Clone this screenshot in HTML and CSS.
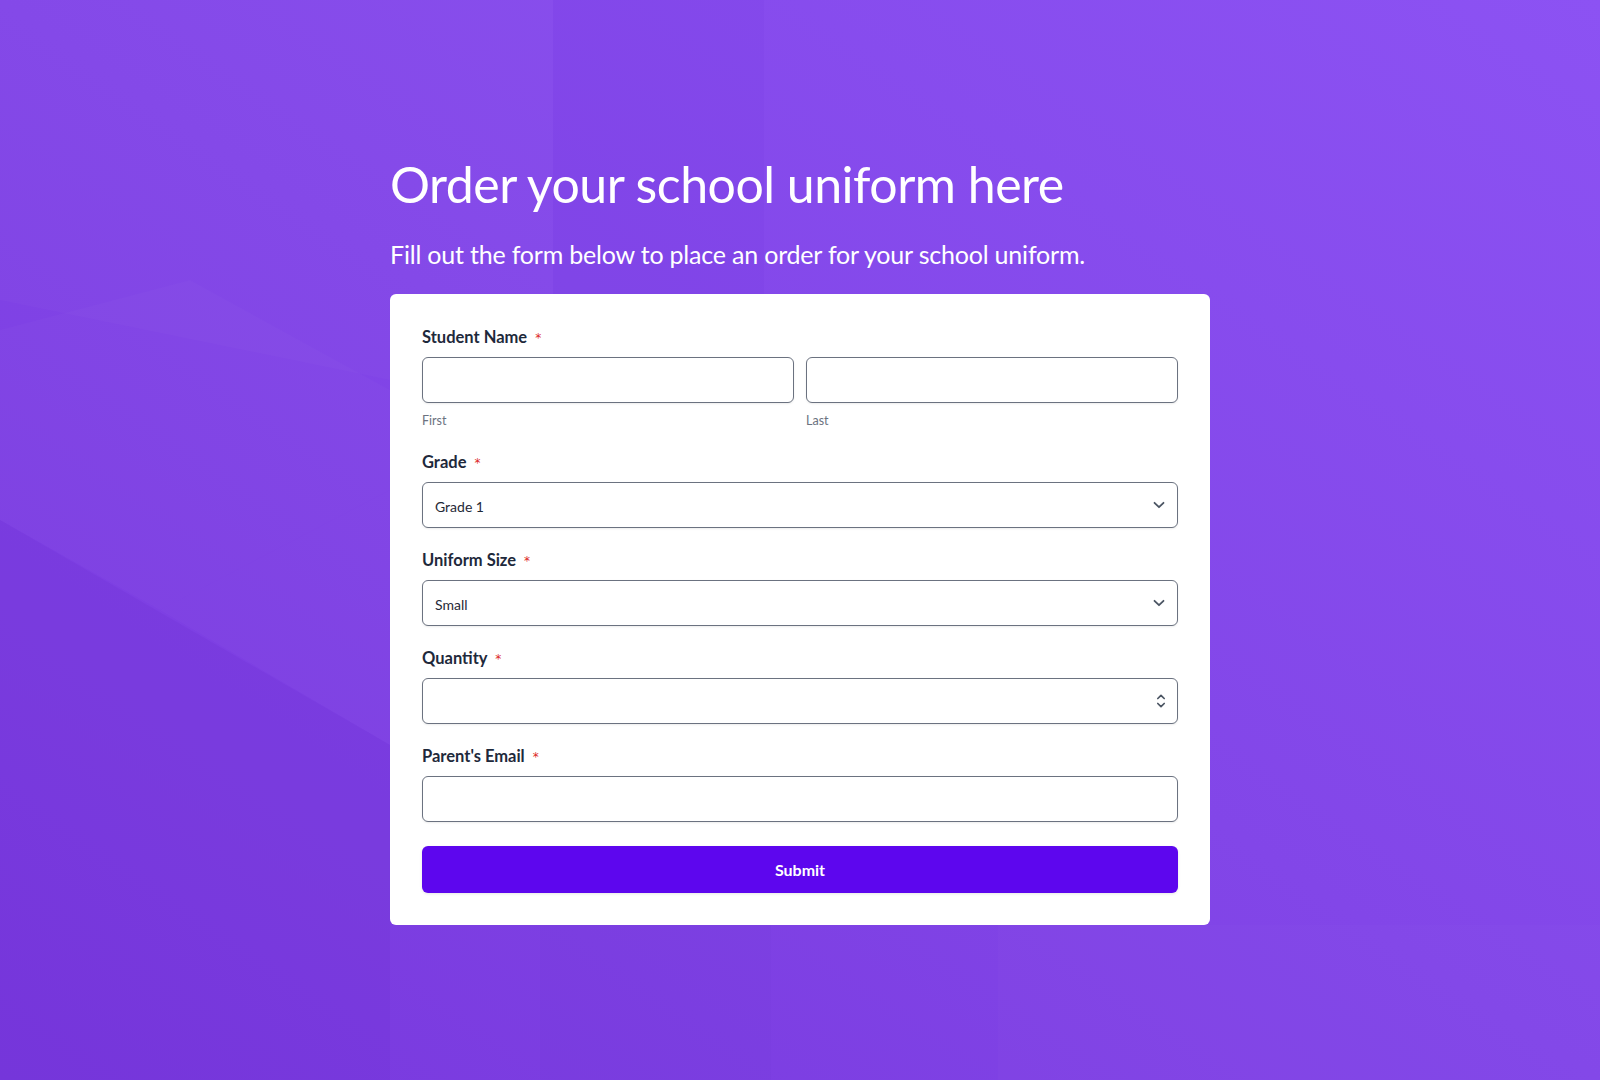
FILE: index.html
```html
<!DOCTYPE html>
<html lang="en">
<head>
<meta charset="utf-8">
<title>Order your school uniform here</title>
<link rel="stylesheet" href="styles.css">
</head>
<body>
<div class="bg" aria-hidden="true">
  <svg class="bg-art" viewBox="0 0 1600 1080" preserveAspectRatio="none" xmlns="http://www.w3.org/2000/svg">
    <defs>
      <linearGradient id="base" x1="0" y1="1" x2="1" y2="0">
        <stop offset="0" stop-color="#7838dd"/>
        <stop offset="0.5" stop-color="#8246e8"/>
        <stop offset="1" stop-color="#8c52f3"/>
      </linearGradient>
    </defs>
    <rect width="1600" height="1080" fill="url(#base)"/>
    <polygon points="0,520 390,745 390,1080 0,1080" fill="#6a2bd0" opacity="0.16"/>
    <polygon points="0,0 553,0 553,300 390,380 0,300" fill="#ffffff" opacity="0.02"/>
    <polygon points="0,330 190,280 390,390 390,490 160,610 0,520" fill="#ffffff" opacity="0.018"/>
    <polygon points="160,610 390,490 390,745" fill="#ffffff" opacity="0.018"/>
    <rect x="553" y="0" width="211" height="294" fill="#6a2bd0" opacity="0.07"/>
    <rect x="540" y="925" width="231" height="155" fill="#6a2bd0" opacity="0.06"/>
    <rect x="998" y="925" width="602" height="155" fill="#ffffff" opacity="0.015"/>
  </svg>
</div>
<main class="wrap">
  <h1 class="title">Order your school uniform here</h1>
  <p class="lead">Fill out the form below to place an order for your school uniform.</p>
  <form class="card" onsubmit="return false">
    <div class="field field-name">
      <label class="lbl">Student Name <span class="req">*</span></label>
      <div class="name-row">
        <div class="sub">
          <input class="ctl" type="text" aria-label="First">
          <span class="hint">First</span>
        </div>
        <div class="sub">
          <input class="ctl" type="text" aria-label="Last">
          <span class="hint">Last</span>
        </div>
      </div>
    </div>
    <div class="field">
      <label class="lbl">Grade <span class="req">*</span></label>
      <div class="ctl-wrap">
        <div class="ctl ctl-select">Grade 1</div>
        <svg class="ico" width="12" height="8" viewBox="0 0 12 8"><path d="M1.5 1.8 L6 6.2 L10.5 1.8" fill="none" stroke="#4b5563" stroke-width="1.8" stroke-linecap="round" stroke-linejoin="round"/></svg>
      </div>
    </div>
    <div class="field">
      <label class="lbl">Uniform Size <span class="req">*</span></label>
      <div class="ctl-wrap">
        <div class="ctl ctl-select">Small</div>
        <svg class="ico" width="12" height="8" viewBox="0 0 12 8"><path d="M1.5 1.8 L6 6.2 L10.5 1.8" fill="none" stroke="#4b5563" stroke-width="1.8" stroke-linecap="round" stroke-linejoin="round"/></svg>
      </div>
    </div>
    <div class="field">
      <label class="lbl">Quantity <span class="req">*</span></label>
      <div class="ctl-wrap">
        <input class="ctl" type="text" inputmode="numeric" aria-label="Quantity">
        <svg class="ico ico-spin" width="10" height="16" viewBox="0 0 10 16"><path d="M1.8 5.5 L5 2.3 L8.2 5.5 M1.8 10.5 L5 13.7 L8.2 10.5" fill="none" stroke="#4b5563" stroke-width="1.7" stroke-linecap="round" stroke-linejoin="round"/></svg>
      </div>
    </div>
    <div class="field">
      <label class="lbl">Parent's Email <span class="req">*</span></label>
      <input class="ctl" type="email" aria-label="Parent's Email">
    </div>
    <button class="submit" type="submit">Submit</button>
  </form>
</main>
</body>
</html>
```

FILE: styles.css
```css
* { box-sizing: border-box; }

html, body {
  margin: 0;
  padding: 0;
}

body {
  min-height: 1080px;
  position: relative;
  font-family: Lato, "Noto Sans", sans-serif;
  color: #1e293b;
  overflow: hidden;
}

.bg {
  position: absolute;
  inset: 0;
  z-index: 0;
}

.bg-art {
  display: block;
  width: 100%;
  height: 100%;
}

.wrap {
  position: relative;
  z-index: 1;
  width: 820px;
  margin: 0 auto;
  padding-top: 153px;
  display: flex;
  flex-direction: column;
}

.title {
  margin: 0;
  font-family: Lato, sans-serif;
  font-weight: 400;
  font-size: 50px;
  line-height: 62px;
  color: #ffffff;
  letter-spacing: -0.5px;
}

.lead {
  margin: 23px 0 0;
  font-family: Lato, sans-serif;
  font-size: 25px;
  line-height: 32px;
  color: #ffffff;
  letter-spacing: -0.2px;
}

.card {
  margin-top: 24px;
  background: #ffffff;
  border-radius: 6px;
  padding: 33px 32px 32px;
  display: flex;
  flex-direction: column;
  gap: 22px;
}

.field {
  display: flex;
  flex-direction: column;
}

.field-name {
  padding-bottom: 1px;
}

.lbl {
  font-size: 16.5px;
  font-weight: 700;
  line-height: 20px;
  height: 20px;
  color: #1e293b;
  margin-bottom: 10px;
}

.req {
  color: #dc2626;
  font-family: "DejaVu Sans", sans-serif;
  font-size: 12px;
  line-height: 0;
  font-weight: 400;
  margin-left: 4px;
  position: relative;
  top: -1px;
}

.name-row {
  display: grid;
  grid-template-columns: 1fr 1fr;
  gap: 12px;
}

.sub {
  display: flex;
  flex-direction: column;
}

.hint {
  margin-top: 10px;
  font-size: 12.5px;
  line-height: 16px;
  color: #6b7280;
}

.ctl {
  display: block;
  width: 100%;
  height: 46px;
  border: 1px solid #6b7280;
  border-radius: 6px;
  background: #ffffff;
  box-shadow: 0 1px 2px rgba(0, 0, 0, 0.08);
  font-family: Lato, sans-serif;
  font-size: 14px;
  color: #1f2937;
  padding: 0 12px;
  outline: none;
}

.ctl-select {
  display: flex;
  align-items: center;
  padding-top: 2px;
}

.ctl-wrap {
  position: relative;
}

.ico {
  position: absolute;
  right: 13px;
  top: 19px;
}

.ico-spin {
  right: 12px;
  top: 15px;
}

.submit {
  margin-top: 2px;
  height: 47px;
  border: none;
  border-radius: 6px;
  background: #5d06ee;
  color: #ffffff;
  font-family: Lato, sans-serif;
  font-size: 16px;
  font-weight: 700;
  box-shadow: 0 1px 3px rgba(0, 0, 0, 0.1);
  cursor: pointer;
}
```
